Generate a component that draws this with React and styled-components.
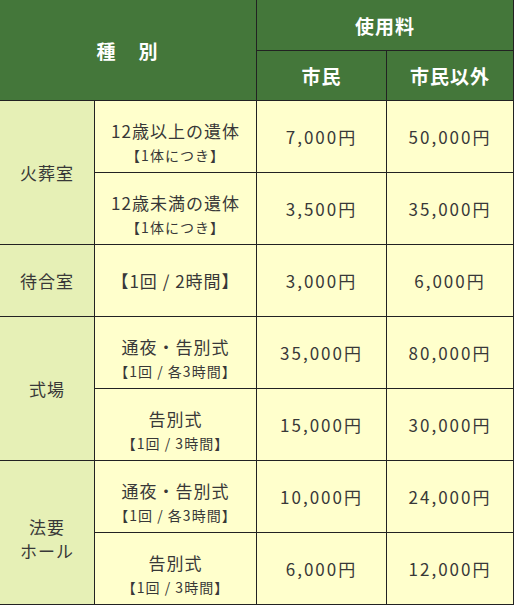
import React from "react";
import styled, { createGlobalStyle } from "styled-components";

const Global = createGlobalStyle`
  html, body { margin: 0; padding: 0; background: #ffffff; }
  body { font-family: "Noto Sans CJK JP", "Noto Sans", sans-serif; }
`;

const Grid = styled.div`
  display: grid;
  width: 514px;
  grid-template-columns: 94px 161px 129px 126px;
  grid-template-rows: 50px 49px repeat(7, 71px);
  gap: 1px;
  padding: 0 1px 1px 0;
  background: #222222;
  box-sizing: border-box;
  color: #383838;
  font-size: 17px;
  letter-spacing: 1px;
`;

const Cell = styled.div`
  display: flex;
  flex-direction: column;
  align-items: center;
  justify-content: center;
  text-align: center;
  box-sizing: border-box;
  grid-column: ${(p) => p.$col || "auto"};
  grid-row: ${(p) => p.$row || "auto"};
  padding-top: ${(p) => p.$shift || 0}px;
`;

const Head = styled(Cell)`
  background: #44773a;
  color: #ffffff;
  font-weight: 700;
  font-size: 19px;
  letter-spacing: ${(p) => p.$ls || 1}px;
`;

const Label = styled(Cell)`
  background: #e6f0b6;
`;

const Data = styled(Cell)`
  background: #ffffcc;
`;

const Price = styled(Data)`
  letter-spacing: 2px;
`;

const Main = styled.span`
  display: block;
  line-height: ${(p) => p.$lh || 25}px;
`;

const Sub = styled.span`
  display: block;
  line-height: 25px;
  font-size: 14px;
  letter-spacing: 1px;
`;

const rows = [
  { label: ["火葬室"], span: 2, items: [
    { main: "12歳以上の遺体", sub: "【1体につき】", a: "7,000円", b: "50,000円" },
    { main: "12歳未満の遺体", sub: "【1体につき】", a: "3,500円", b: "35,000円" },
  ]},
  { label: ["待合室"], span: 1, items: [
    { single: "【1回 / 2時間】", a: "3,000円", b: "6,000円" },
  ]},
  { label: ["式場"], span: 2, items: [
    { main: "通夜・告別式", sub: "【1回 / 各3時間】", a: "35,000円", b: "80,000円" },
    { main: "告別式", sub: "【1回 / 3時間】", a: "15,000円", b: "30,000円" },
  ]},
  { label: ["法要", "ホール"], span: 2, shift: 12, items: [
    { main: "通夜・告別式", sub: "【1回 / 各3時間】", a: "10,000円", b: "24,000円" },
    { main: "告別式", sub: "【1回 / 3時間】", a: "6,000円", b: "12,000円" },
  ]},
];

export default function App() {
  let r = 3;
  const body = [];
  rows.forEach((g, gi) => {
    body.push(
      <Label key={`l${gi}`} $col="1" $row={`${r} / span ${g.span}`} $shift={g.shift}>
        {g.label.map((t) => (
          <Main key={t} $lh={24}>{t}</Main>
        ))}
      </Label>
    );
    g.items.forEach((it, ii) => {
      const row = r + ii;
      body.push(
        <Data key={`d${gi}-${ii}`} $col="2" $row={`${row}`} $shift={it.single ? 0 : 12}>
          {it.single ? (
            <Main>{it.single}</Main>
          ) : (
            <>
              <Main>{it.main}</Main>
              <Sub>{it.sub}</Sub>
            </>
          )}
        </Data>
      );
      body.push(<Price key={`a${gi}-${ii}`} $col="3" $row={`${row}`}>{it.a}</Price>);
      body.push(<Price key={`b${gi}-${ii}`} $col="4" $row={`${row}`}>{it.b}</Price>);
    });
    r += g.span;
  });

  return (
    <>
      <Global />
      <Grid>
        <Head $col="1 / span 2" $row="1 / span 2" $ls={2}>種　別</Head>
        <Head $col="3 / span 2" $row="1">使用料</Head>
        <Head $col="3" $row="2">市民</Head>
        <Head $col="4" $row="2">市民以外</Head>
        {body}
      </Grid>
    </>
  );
}
